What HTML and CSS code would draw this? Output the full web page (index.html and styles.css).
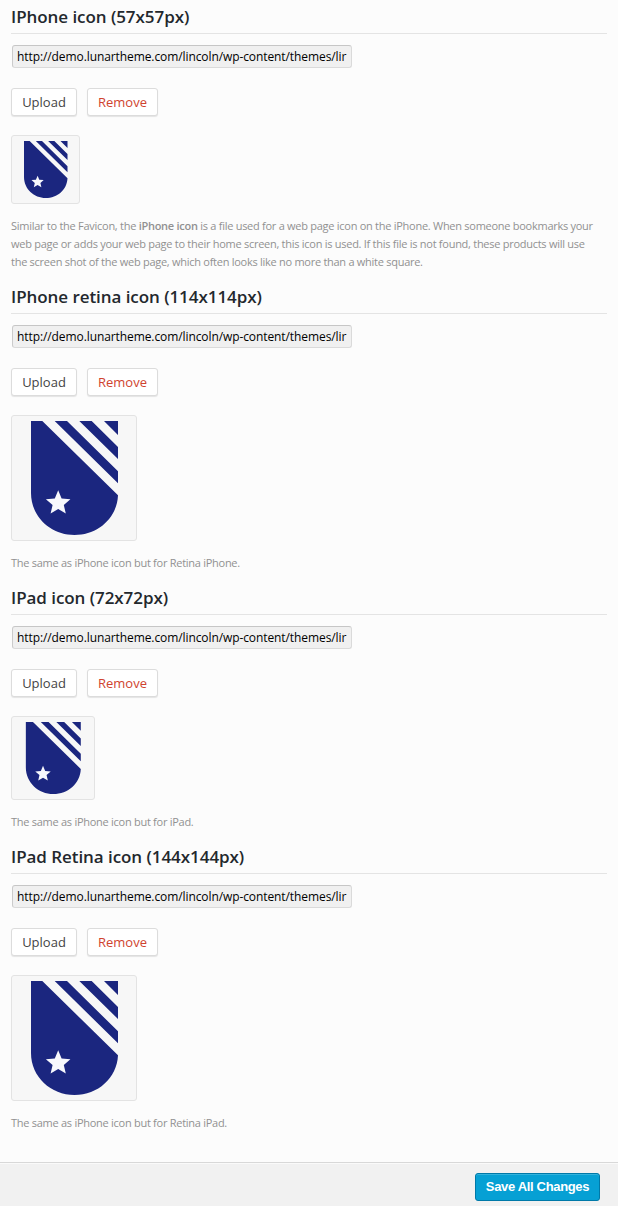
FILE: index.html
```
<!DOCTYPE html>
<html lang="en">
<head>
<meta charset="utf-8">
<title>Icon settings</title>
<link rel="stylesheet" href="styles.css">
</head>
<body>
<svg class="defs" width="0" height="0" aria-hidden="true">
  <symbol id="shield" viewBox="0 0 114 114">
    <path fill="#1b267f" d="M14 0H25.3L101 74.3C100 97 81 114 57.5 114S14 96 14 72ZM37.7 0H50L101 50.3V62.3ZM62.3 0H74.7L101 26V38ZM87 0H101V14Z"/>
    <path fill="#f7f8fd" d="M41.2 69.3L44.6 77.4L53.4 78.2L46.8 84L48.8 92.6L41.2 88.1L33.6 92.6L35.6 84L28.9 78.2L37.8 77.4Z"/>
  </symbol>
</svg>
<main class="options">
  <section class="option">
    <h3 class="heading">IPhone icon (57x57px)</h3>
    <div class="field">http://demo.lunartheme.com/lincoln/wp-content/themes/lir</div>
    <div class="actions"><button class="btn">Upload</button><button class="btn remove">Remove</button></div>
    <div class="preview"><svg width="57" height="57"><use href="#shield"/></svg></div>
    <p class="explain">Similar to the Favicon, the <b>iPhone icon</b> is a file used for a web page icon on the iPhone. When someone bookmarks your<br>web page or adds your web page to their home screen, this icon is used. If this file is not found, these products will use<br>the screen shot of the web page, which often looks like no more than a white square.</p>
  </section>
  <section class="option">
    <h3 class="heading">IPhone retina icon (114x114px)</h3>
    <div class="field">http://demo.lunartheme.com/lincoln/wp-content/themes/lir</div>
    <div class="actions"><button class="btn">Upload</button><button class="btn remove">Remove</button></div>
    <div class="preview"><svg width="114" height="114"><use href="#shield"/></svg></div>
    <p class="explain">The same as iPhone icon but for Retina iPhone.</p>
  </section>
  <section class="option">
    <h3 class="heading">IPad icon (72x72px)</h3>
    <div class="field">http://demo.lunartheme.com/lincoln/wp-content/themes/lir</div>
    <div class="actions"><button class="btn">Upload</button><button class="btn remove">Remove</button></div>
    <div class="preview"><svg width="72" height="72"><use href="#shield"/></svg></div>
    <p class="explain">The same as iPhone icon but for iPad.</p>
  </section>
  <section class="option">
    <h3 class="heading">IPad Retina icon (144x144px)</h3>
    <div class="field">http://demo.lunartheme.com/lincoln/wp-content/themes/lir</div>
    <div class="actions"><button class="btn">Upload</button><button class="btn remove">Remove</button></div>
    <div class="preview"><svg width="114" height="114"><use href="#shield"/></svg></div>
    <p class="explain">The same as iPhone icon but for Retina iPad.</p>
  </section>
</main>
<footer class="footer"><button class="save">Save All Changes</button></footer>
</body>
</html>
```
FILE: styles.css
```
* { box-sizing: border-box; }
body {
  margin: 0;
  height: 1206px;
  display: flex;
  flex-direction: column;
  overflow: hidden;
  background: #fcfcfc;
  font-family: "Open Sans", sans-serif;
}
.defs { display: none; }
.options { flex: 1; padding: 0 11px; }
.option:first-child .heading { height: 34px; padding-top: 5px; }
.heading {
  margin: 0;
  height: 43px;
  padding-top: 14px;
  border-bottom: 1px solid #e4e4e4;
  color: #23282d;
  font-size: 17px;
  font-weight: 600;
  line-height: 24px;
  letter-spacing: -0.06px;
  white-space: nowrap;
}
.field {
  width: 340px;
  height: 23px;
  margin: 11px 0 0 1px;
  border: 1px solid #dadada;
  border-top-color: #c6c6c6;
  border-left-color: #cbcbcb;
  border-radius: 3px;
  padding-left: 4px;
  background: #f0f0f0;
  color: #000;
  font-size: 12px;
  font-weight: 500;
  line-height: 22px;
  letter-spacing: -0.09px;
  white-space: nowrap;
}
.actions { display: flex; gap: 10px; margin-top: 20px; }
.btn {
  width: 66px;
  height: 28px;
  padding: 0;
  border: 1px solid #dcdcdc;
  border-radius: 3px;
  box-shadow: 0 1px 1px #e4e4e4;
  background: #fff;
  color: #444;
  font: 13px/26px "Open Sans", sans-serif;
}
.remove { width: 71px; color: #d0432f; }
.preview {
  width: fit-content;
  margin-top: 19px;
  padding: 5px;
  border: 1px solid #e3e3e3;
  border-radius: 3px;
  background: #f7f7f7;
}
.preview svg { display: block; }
.explain {
  margin: 13px 0 0;
  color: #919191;
  font-size: 11px;
  line-height: 18px;
  letter-spacing: -0.27px;
  white-space: nowrap;
}
.explain b { font-weight: 600; }
.footer {
  display: flex;
  justify-content: flex-end;
  height: 44px;
  padding: 10px 18px 0 0;
  border-top: 1px solid #d8d8d8;
  background: #f1f1f1;
  box-shadow: inset 0 1px 0 #fafafa;
}
.save {
  width: 125px;
  height: 28px;
  padding: 0;
  border: 1px solid #0079a8;
  border-radius: 3px;
  background: #06a0d4;
  box-shadow: inset 0 1px 0 #32b2dc;
  color: #fff;
  font: bold 13px/26px "Liberation Sans", Arial, sans-serif;
  letter-spacing: -0.33px;
}
```
